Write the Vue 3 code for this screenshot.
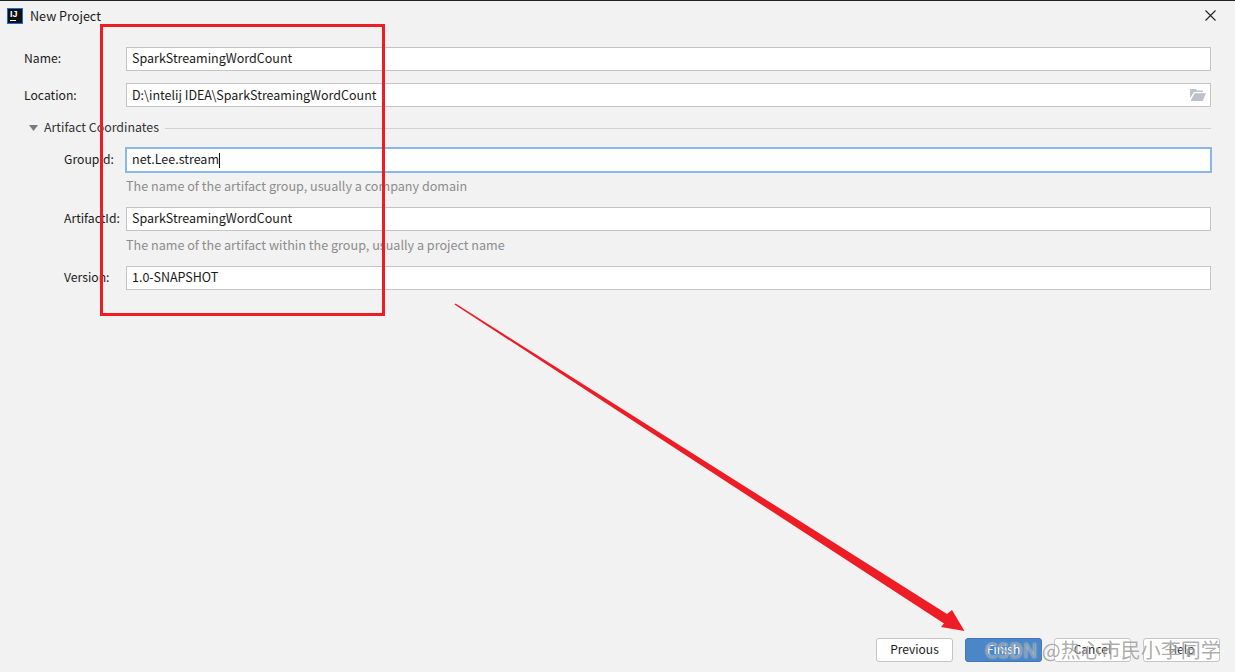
<script setup>
const hintA = 'The name of the artifact group, usually a company domain'
const hintB = 'The name of the artifact within the group, usually a project name'
</script>

<template>
  <div class="dialog">
    <header class="titlebar">
      <div class="logo"><span class="logo-t">IJ</span><span class="logo-u"></span></div>
      <span class="title">New Project</span>
      <svg class="close" width="11" height="11" viewBox="0 0 11 11"><path d="M0.5 0.5L10.5 10.5M10.5 0.5L0.5 10.5" stroke="#222" stroke-width="1.1" fill="none"/></svg>
    </header>

    <main class="form">
      <div class="row top">
        <label class="lab">Name:</label>
        <div class="input"><span class="val">SparkStreamingWordCount</span></div>
      </div>
      <div class="row top loc">
        <label class="lab">Location:</label>
        <div class="input">
          <span class="val grow">D:\intelij IDEA\SparkStreamingWordCount</span>
          <svg class="folder" width="16" height="12" viewBox="0 0 16 12"><path d="M0 0H6L7 1.5H13V3H4L0 9Z M4.6 4.2H16L12.6 12H0.4Z" fill="#bcc2c8"/></svg>
        </div>
      </div>
      <div class="section">
        <svg width="10" height="6" viewBox="0 0 10 6"><path d="M0 0H9L4.5 6Z" fill="#7a7a7a"/></svg>
        <span class="sec-t">Artifact Coordinates</span>
        <span class="line"></span>
      </div>
      <div class="row sub group">
        <label class="lab">GroupId:</label>
        <div class="input focus"><span class="val">net.Lee.stream</span><span class="caret"></span></div>
      </div>
      <p class="hint">{{ hintA }}</p>
      <div class="row sub">
        <label class="lab">ArtifactId:</label>
        <div class="input"><span class="val">SparkStreamingWordCount</span></div>
      </div>
      <p class="hint">{{ hintB }}</p>
      <div class="row sub">
        <label class="lab">Version:</label>
        <div class="input"><span class="val">1.0-SNAPSHOT</span></div>
      </div>
    </main>

    <footer class="footer">
      <button class="btn">Previous</button>
      <button class="btn primary">Finish</button>
      <button class="btn">Cancel</button>
      <button class="btn">Help</button>
    </footer>

    <div class="redbox"></div>
    <svg class="arrow" width="1235" height="672" viewBox="0 0 1235 672">
      <path d="M454.5 304.5L455.5 303.5L947 614L952 610L964.5 631L941 627L944 623.5Z" fill="#ee1c25"/>
    </svg>
    <div class="watermark">CSDN @热心市民小李同学</div>
  </div>
</template>

<style>
html, body { margin: 0; background: #f2f2f2; }
</style>

<style scoped>
.dialog {
  position: relative;
  width: 1235px;
  height: 672px;
  box-sizing: border-box;
  border-top: 1px solid #222;
  background: #f2f2f2;
  overflow: hidden;
  display: flex;
  flex-direction: column;
  font-family: "Noto Sans CJK SC", "Noto Sans", sans-serif;
  font-size: 12.2px;
  color: #1a1a1a;
}
.titlebar {
  height: 30px;
  display: flex;
  align-items: center;
  padding: 0 19px 0 7px;
}
.logo {
  width: 16px;
  height: 16px;
  box-sizing: border-box;
  background: #111;
  border: 1px solid #1a6fd0;
  position: relative;
  color: #fff;
  margin-right: 7px;
}
.logo-t {
  position: absolute;
  left: 2px;
  top: 0;
  font: bold 9px/10px "Liberation Sans", sans-serif;
}
.logo-u {
  position: absolute;
  left: 2px;
  bottom: 2px;
  width: 6px;
  height: 1px;
  background: #fff;
}
.title { flex: 1; font-size: 12.6px; padding-bottom: 2px; }
.close { display: block; margin-bottom: 2px; }
.form {
  padding: 16px 24px 0 24px;
  display: flex;
  flex-direction: column;
}
.row {
  display: flex;
  align-items: center;
  height: 24px;
}
.lab { width: 102px; flex: none; padding-bottom: 3px; }
.input {
  flex: 1;
  height: 24px;
  box-sizing: border-box;
  border: 1px solid #c4c4c4;
  background: #fff;
  padding: 0 5px;
  display: flex;
  align-items: center;
  white-space: nowrap;
  font-size: 12.5px;
}
.val { line-height: 20px; padding-bottom: 2px; }
.grow { flex: 1; }
.folder { display: block; margin-right: -1px; }
.loc { margin-top: 12px; }
.loc .lab { padding-bottom: 1px; }
.loc .val { padding-bottom: 1px; }
.section {
  display: flex;
  align-items: center;
  height: 20px;
  margin-top: 11px;
  margin-left: 5px;
  color: #333;
}
.sec-t { margin-left: 5px; margin-right: 6px; padding-bottom: 3px; font-size: 12.4px; }
.line { flex: 1; height: 1px; background: #d2d2d2; }
.sub { padding-left: 40px; }
.sub .lab { width: 62px; }
.group { margin-top: 10px; }
.focus {
  border-color: #8ab6ea;
  box-shadow: 0 0 0 1px #8ab6ea;
}
.caret {
  display: block;
  flex: none;
  width: 1px;
  height: 15px;
  background: #111;
}
.hint {
  margin: 5px 0 0 102px;
  height: 30px;
  line-height: 18px;
  color: #8c8c8c;
  font-size: 12.6px;
}
.footer {
  margin-top: auto;
  display: flex;
  justify-content: flex-end;
  gap: 12px;
  padding: 0 15px 10px 0;
}
.btn {
  width: 77px;
  height: 24px;
  box-sizing: border-box;
  border: 1px solid #c4c4c4;
  border-radius: 3px;
  background: #fff;
  color: #1a1a1a;
  font: inherit;
  font-size: 12px;
  padding: 0 0 3px;
}
.primary {
  background: #4a86c8;
  border-color: #3f78b8;
  color: #fff;
}
.redbox {
  position: absolute;
  left: 100px;
  top: 23px;
  width: 285px;
  height: 292px;
  box-sizing: border-box;
  border: 3px solid #ee1c25;
}
.arrow {
  position: absolute;
  left: 0;
  top: -1px;
  pointer-events: none;
}
.watermark {
  position: absolute;
  left: 985px;
  top: 635px;
  font-size: 20px;
  line-height: 28px;
  white-space: nowrap;
  color: rgba(125, 125, 125, 0.65);
  text-shadow: 0 0 2px rgba(255,255,255,.9);
}
</style>
